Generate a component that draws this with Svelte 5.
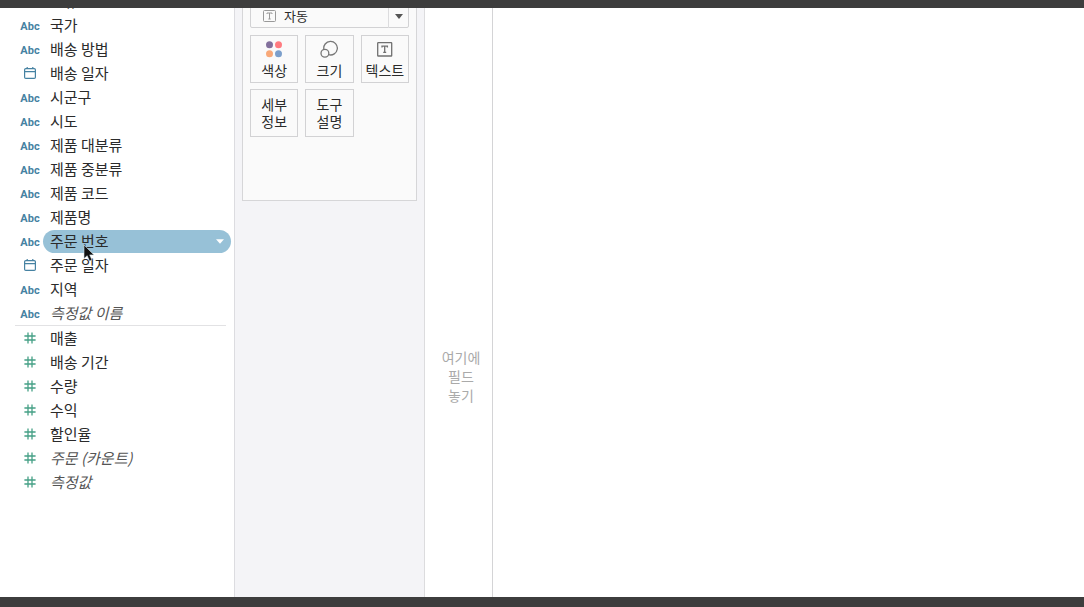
<script>
  const dimensions = [
    { type: 'abc', name: '분류' },
    { type: 'abc', name: '국가' },
    { type: 'abc', name: '배송 방법' },
    { type: 'date', name: '배송 일자' },
    { type: 'abc', name: '시군구' },
    { type: 'abc', name: '시도' },
    { type: 'abc', name: '제품 대분류' },
    { type: 'abc', name: '제품 중분류' },
    { type: 'abc', name: '제품 코드' },
    { type: 'abc', name: '제품명' },
    { type: 'abc', name: '주문 번호' },
    { type: 'date', name: '주문 일자' },
    { type: 'abc', name: '지역' },
    { type: 'abc', name: '측정값 이름', generated: true }
  ];
  const measures = [
    { type: 'num', name: '매출' },
    { type: 'num', name: '배송 기간' },
    { type: 'num', name: '수량' },
    { type: 'num', name: '수익' },
    { type: 'num', name: '할인율' },
    { type: 'num', name: '주문 (카운트)', generated: true },
    { type: 'num', name: '측정값', generated: true }
  ];
  let selected = $state('주문 번호');
</script>

{#snippet fieldRow(field)}
  <li class="row">
    <span class="type">
      {#if field.type === 'abc'}
        <span class="abc">Abc</span>
      {:else if field.type === 'date'}
        <svg width="14" height="14" viewBox="0 0 14 14" fill="none" stroke="#4682a2" stroke-width="1.2">
          <rect x="1.6" y="2.6" width="10.8" height="9.8" rx="1.2" />
          <path d="M1.6 5.6H12.4M4.2 1V3M9.8 1V3" />
        </svg>
      {:else}
        <svg width="12" height="12" viewBox="0 0 12 12" fill="none" stroke="#46a086" stroke-width="1.3">
          <path d="M4 .5V11.5M8 .5V11.5M.4 4H11.6M.4 8H11.6" />
        </svg>
      {/if}
    </span>
    <button
      class="field"
      class:selected={selected === field.name}
      class:generated={field.generated}
      onclick={() => (selected = field.name)}
    >
      <span>{field.name}</span>
      {#if selected === field.name}
        <svg class="caret" width="8" height="5" viewBox="0 0 8 5"><path d="M0 .3H8L4 4.8Z" fill="#fff" /></svg>
      {/if}
    </button>
    {#if field.name === '주문 번호'}
      <svg class="pointer" width="13" height="19" viewBox="0 0 13 19">
        <path d="M1 1V14.6L4.2 11.7L6.5 17L9 15.9L6.7 10.9H11Z" fill="#111" stroke="#d5e3ea" stroke-width=".6" />
      </svg>
    {/if}
  </li>
{/snippet}

<div class="app">
  <div class="workspace">
    <aside class="data">
      <ul>
        {#each dimensions as field}{@render fieldRow(field)}{/each}
      </ul>
      <hr />
      <ul>
        {#each measures as field}{@render fieldRow(field)}{/each}
      </ul>
    </aside>

    <section class="shelves">
      <div class="marks">
        <div class="mark-type">
          <svg class="mark-icon" width="13" height="12" viewBox="0 0 13 12" fill="none" stroke="#999">
            <rect x=".5" y=".5" width="12" height="11" rx="1" />
            <path d="M4 4V3H9V4M6.5 3V9M5.3 9H7.7" />
          </svg>
          <select aria-label="마크">
            <option>자동</option>
          </select>
          <span class="divider"></span>
          <svg class="mark-caret" width="8" height="5" viewBox="0 0 8 5"><path d="M0 0H8L4 5Z" fill="#555" /></svg>
        </div>
        <div class="cards">
          <button class="card">
            <svg width="18" height="18" viewBox="0 0 18 18">
              <circle cx="4.5" cy="4.7" r="3.5" fill="#82709c" />
              <circle cx="13.5" cy="4.7" r="3.5" fill="#ff7b80" />
              <circle cx="4.5" cy="13.7" r="3.5" fill="#f8a878" />
              <circle cx="13.5" cy="13.7" r="3.5" fill="#7c9fcb" />
            </svg>
            <span>색상</span>
          </button>
          <button class="card">
            <svg width="18" height="18" viewBox="0 0 18 18" fill="none" stroke="#777" stroke-width="1.3">
              <path d="M3.9 9.6A6.8 6.8 0 1 1 8.6 14.7" />
              <circle cx="4.9" cy="13.2" r="3.9" />
            </svg>
            <span>크기</span>
          </button>
          <button class="card">
            <svg width="18" height="18" viewBox="0 0 18 18" fill="none" stroke="#707070" stroke-width="1.3">
              <rect x="1.7" y="2.6" width="14" height="13.4" rx=".6" />
              <path d="M6 7.4V6.2H11.4V7.4M8.7 6.2V12.4M7.2 12.4H10.2" />
            </svg>
            <span>텍스트</span>
          </button>
          <button class="card label-only"><span>세부</span><span>정보</span></button>
          <button class="card label-only"><span>도구</span><span>설명</span></button>
        </div>
      </div>
    </section>

    <section class="drop-rows"><p>여기에<br />필드<br />놓기</p></section>
    <main class="canvas"></main>
  </div>
</div>

<style>
  :global(body) {
    margin: 0;
    background: #fff;
  }
  .app {
    box-sizing: border-box;
    height: 100vh;
    display: flex;
    border-top: 8px solid #3d3d3d;
    border-bottom: 10px solid #3d3d3d;
    font-family: 'Noto Sans CJK KR', 'Noto Sans', sans-serif;
    font-size: 15px;
    color: #2b2b2b;
  }
  .workspace {
    flex: 1;
    min-width: 0;
    display: flex;
    overflow: hidden;
  }
  button,
  select {
    font: inherit;
    color: inherit;
  }
  .data {
    box-sizing: border-box;
    flex: 0 0 235px;
    border-right: 1px solid #dcdce0;
  }
  ul {
    list-style: none;
    margin: 0;
    padding: 0;
  }
  .data ul:first-child {
    margin-top: -19px;
  }
  .row {
    position: relative;
    display: flex;
    align-items: center;
    height: 24px;
    padding: 0 3px 0 17px;
  }
  .type {
    flex: 0 0 26px;
    display: flex;
    justify-content: center;
  }
  .abc {
    padding-top: 3px;
    font: bold 11px/14px Roboto, sans-serif;
    color: #4682a2;
  }
  .field {
    flex: 1;
    display: flex;
    align-items: center;
    justify-content: space-between;
    height: 23px;
    padding: 0 7px;
    border: 0;
    border-radius: 12px;
    background: none;
    line-height: 22px;
    text-align: left;
    white-space: nowrap;
  }
  .selected {
    background: #97c1d7;
  }
  .generated {
    font-style: italic;
    color: #555;
  }
  .pointer {
    position: absolute;
    z-index: 1;
    left: 83px;
    top: 15px;
  }
  hr {
    height: 1px;
    margin: 0 8px 0 15px;
    border: 0;
    background: #e2e2e4;
  }
  .shelves {
    box-sizing: border-box;
    flex: 0 0 190px;
    padding: 0 7px;
    background: #f4f4f7;
    border-right: 1px solid #dcdcde;
  }
  .marks {
    box-sizing: border-box;
    min-height: 197px;
    padding: 0 7px;
    border: 1px solid #d6d6d8;
    border-top: 0;
    background: #fafafa;
  }
  .mark-type {
    display: grid;
    grid-template-columns: 13px 13px 1fr 1px 20px;
    align-items: center;
    height: 24px;
    margin: -4px 0 7px;
  }
  .mark-type > * {
    grid-row: 1;
  }
  .mark-icon {
    grid-column: 2;
    pointer-events: none;
    z-index: 1;
  }
  .mark-type select {
    grid-column: 1 / -1;
    box-sizing: border-box;
    width: 100%;
    height: 24px;
    padding: 0 24px 0 33px;
    appearance: none;
    border: 1px solid #d2d2d4;
    border-radius: 2px;
    background: #fafafa;
    font-size: 13px;
    line-height: 20px;
  }
  .divider {
    grid-column: 4;
    height: 24px;
    background: #dcdcde;
    z-index: 1;
    pointer-events: none;
  }
  .mark-caret {
    grid-column: 5;
    justify-self: center;
    z-index: 1;
    pointer-events: none;
  }
  .cards {
    display: grid;
    grid-template-columns: repeat(3, 1fr);
    gap: 6px 7px;
  }
  .card {
    box-sizing: border-box;
    height: 48px;
    padding: 0;
    display: flex;
    flex-direction: column;
    align-items: center;
    justify-content: center;
    gap: 4px;
    border: 1px solid #d2d2d4;
    background: #fafafa;
    font-size: 14px;
    line-height: 17px;
    white-space: nowrap;
  }
  .label-only {
    gap: 0;
  }
  .drop-rows {
    box-sizing: border-box;
    flex: 0 0 68px;
    display: flex;
    align-items: center;
    justify-content: center;
    padding: 148px 0 0 5px;
    border-right: 1px solid #d4d4d6;
    color: #aaa;
    font-size: 14px;
    line-height: 19px;
    text-align: center;
  }
  .drop-rows p {
    margin: 0;
  }
  .canvas {
    flex: 1;
    min-width: 0;
  }
</style>
